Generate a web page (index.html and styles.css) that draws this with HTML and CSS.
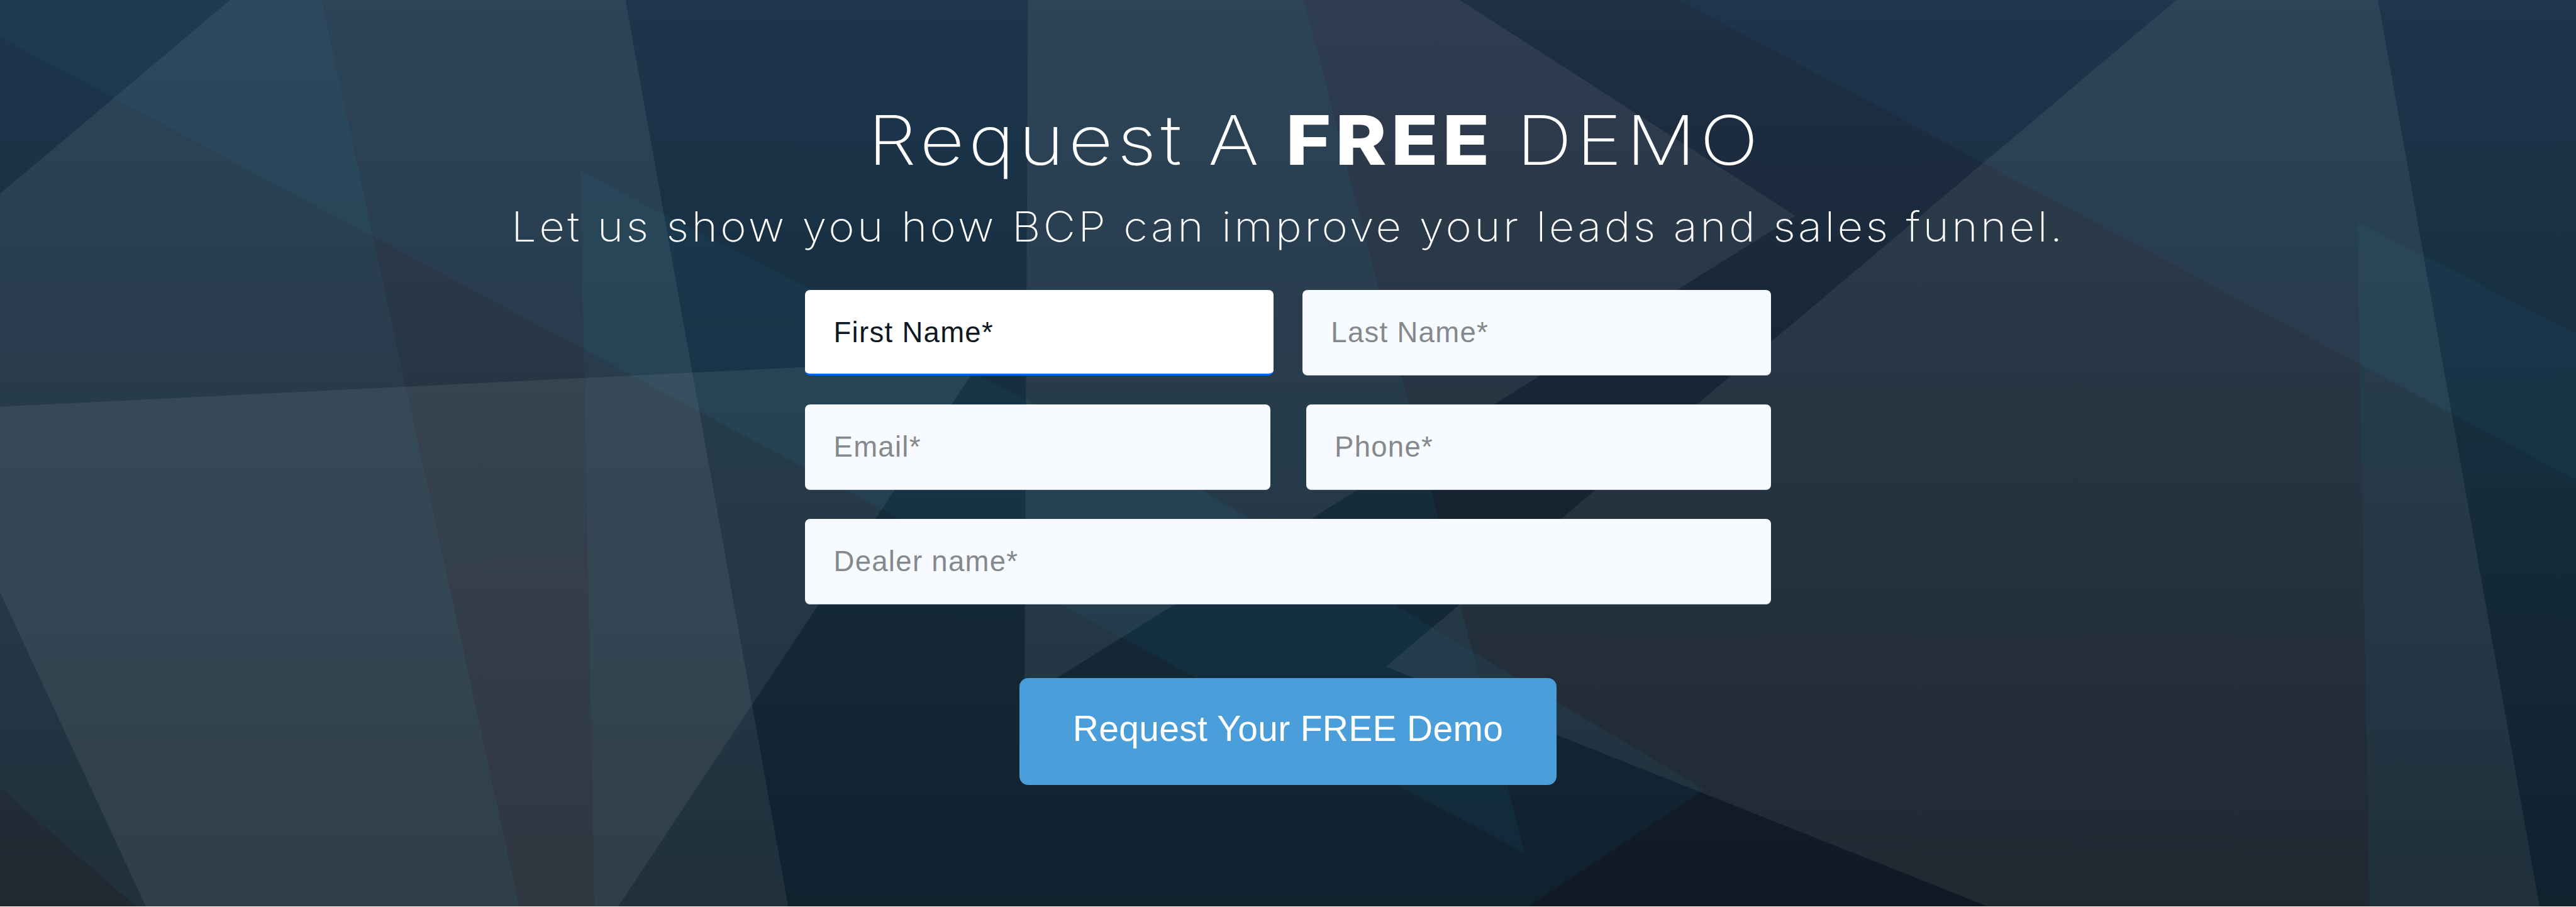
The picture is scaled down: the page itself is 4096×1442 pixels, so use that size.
FILE: index.html
```html
<!DOCTYPE html>
<html lang="en">
<head>
<meta charset="utf-8">
<title>Request A Free Demo</title>
<link rel="stylesheet" href="styles.css">
</head>
<body>
<section class="demo">
  <svg class="facets" viewBox="0 0 4320 1521" preserveAspectRatio="none" aria-hidden="true">
    <g class="facet-teal">
      <polygon points="0,0 2187,0 2557,1431 0,62"/>
      <polygon points="0,0 539,0 871,1521 229,1521 0,1321"/>
      <polygon points="973,287 2015,822 2858,1324 2562,1521 997,1521"/>
      <polygon points="2816,0 4320,0 4320,805"/>
      <polygon points="3953,372 4320,559 4320,1521 3974,1521"/>
    </g>
    <g class="facet-light">
      <polygon points="386,0 1049,0 1322,1521 0,1521 0,325"/>
      <polygon points="0,682 1647,601 1036,1521 245,1521 0,993"/>
      <polygon points="1724,0 2448,0 3011,362 1718,1171"/>
      <polygon points="3650,0 3988,0 4259,1521 3335,1521 2324,1118"/>
    </g>
  </svg>
  <div class="content">
    <h1 class="title">Request A <strong>FREE</strong> DEMO</h1>
    <p class="subtitle">Let us show you how BCP can improve your leads and sales funnel.</p>
    <form class="form">
      <div class="row row-names">
        <input class="field field-active" type="text" placeholder="First Name*">
        <input class="field" type="text" placeholder="Last Name*">
      </div>
      <div class="row row-contact">
        <input class="field" type="text" placeholder="Email*">
        <input class="field" type="text" placeholder="Phone*">
      </div>
      <div class="row">
        <input class="field" type="text" placeholder="Dealer name*">
      </div>
      <button class="submit" type="button">Request Your FREE Demo</button>
    </form>
  </div>
</section>
</body>
</html>
```

FILE: styles.css
```css
* { box-sizing: border-box; }

body {
  margin: 0;
  background: #fff;
  font-family: "Liberation Sans", Arial, sans-serif;
}

.demo {
  display: grid;
  height: 1441.4px;
  overflow: hidden;
  background: linear-gradient(#1f2f44, #162533 50%, #101923);
}

.facets,
.content { grid-area: 1 / 1; }

.facets {
  display: block;
  width: 100%;
  height: 1442px;
}

.facet-teal { fill: rgba(22, 140, 180, 0.08); }
.facet-light { fill: rgba(255, 255, 255, 0.07); }

.content {
  position: relative;
  display: flex;
  flex-direction: column;
  align-items: center;
  padding-top: 156px;
  color: #fff;
  text-align: center;
}

.title {
  margin: 0;
  padding-left: 76px;
  font: 200 109px/132px Inter, sans-serif;
  letter-spacing: 6px;
  word-spacing: -5px;
  white-space: nowrap;
  transform: scaleX(1.13);
}

.title strong { font-weight: 800; }

.subtitle {
  margin: 30px 0 0;
  font: 200 66px/84px Inter, sans-serif;
  letter-spacing: 4px;
  white-space: nowrap;
  transform: scaleX(1.071);
}

.form {
  display: flex;
  flex-direction: column;
  gap: 45.5px;
  width: 1536px;
  margin-top: 58.8px;
}

.row { display: flex; }
.row-names { gap: 45.6px; }
.row-contact { gap: 57px; }

.field {
  flex: 1;
  min-width: 0;
  height: 136.5px;
  padding: 1px 45.5px 0;
  border: 0;
  border-bottom: 1px solid #c9d2dc;
  border-radius: 8px;
  background: #f7faff;
  color: #0e1822;
  font: 45.5px "Liberation Sans", Arial, sans-serif;
  letter-spacing: 1.3px;
}

.field::placeholder {
  color: #85888d;
  opacity: 1;
}

.field-active {
  padding-top: 3px;
  border-bottom: 3px solid #0066ff;
  background: #fff;
}

.field-active::placeholder { color: #0e1822; }

.submit {
  align-self: center;
  width: 853.3px;
  height: 170.7px;
  margin-top: 71px;
  padding: 0 0 11px;
  border: 0;
  border-radius: 14px;
  background: #4a9ed9;
  color: #fff;
  font: 57px "Liberation Sans", Arial, sans-serif;
  letter-spacing: 0.3px;
}
```
